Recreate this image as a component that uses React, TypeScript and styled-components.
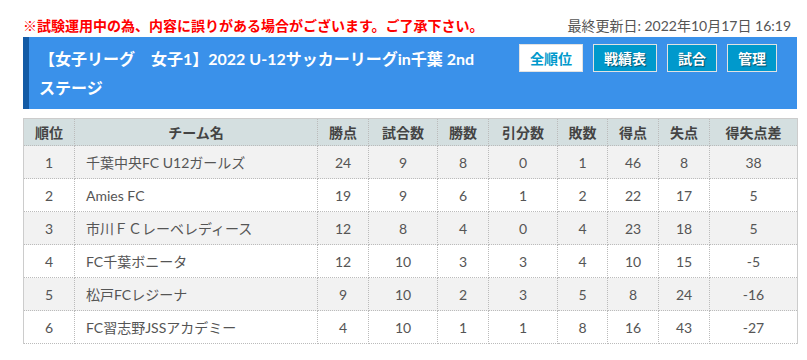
import styled, { createGlobalStyle } from "styled-components";

const GlobalStyle = createGlobalStyle`
  body {
    margin: 0;
    background: #fff;
    font-family: "Lato", "Noto Sans CJK JP", sans-serif;
  }
`;

const Page = styled.div`
  width: 774px;
  padding: 14px 10px 0 23px;
`;

const NoticeRow = styled.div`
  display: flex;
  justify-content: space-between;
  align-items: center;
  height: 23px;
  line-height: 20px;
`;

const Notice = styled.div`
  color: #ff0000;
  font-size: 14px;
  font-weight: 700;
`;

const Updated = styled.div`
  color: #555;
  font-size: 14px;
  margin-right: 6px;
`;

const Banner = styled.div`
  display: flex;
  align-items: flex-start;
  background: #3a91ea;
  border-left: 6px solid #135ba6;
  padding: 7px 20px 7px 10px;
`;

const Title = styled.h1`
  flex: 1;
  margin: 0 10px 0 0;
  color: #fff;
  font-size: 16px;
  font-weight: 700;
  line-height: 29px;
`;

const Word = styled.span`
  white-space: nowrap;
`;

const Nav = styled.div`
  display: flex;
  gap: 10px;
`;

const NavButton = styled.a<{ $active?: boolean }>`
  display: flex;
  align-items: center;
  height: 28px;
  box-sizing: border-box;
  padding: 0 10px;
  border: 1px solid #e2e2e2;
  background: ${(p) => (p.$active ? "#fff" : "#0099cc")};
  color: ${(p) => (p.$active ? "#0099cc" : "#fff")};
  text-shadow: ${(p) => (p.$active ? "none" : "1px 1px 1px #04506b")};
  font-size: 14px;
  font-weight: 700;
  white-space: nowrap;
  cursor: pointer;
`;

const Table = styled.table`
  width: 774px;
  margin-top: 9px;
  border-collapse: collapse;
  table-layout: fixed;
  border-top: 1px solid #cccccc;
  border-left: 1px solid #cccccc;
  border-right: 1px solid #cccccc;
  color: #555;
  font-size: 14px;
`;

const HeadCell = styled.th`
  height: 26px;
  padding: 0;
  background: #d4dfe0;
  color: #444;
  font-weight: 700;
  text-align: center;
  border: 1px dotted #bbbbbb;
  border-top: none;
`;

const Row = styled.tr<{ $odd: boolean }>`
  background: ${(p) => (p.$odd ? "#f2f2f2" : "#fff")};
`;

const Cell = styled.td<{ $left?: boolean }>`
  height: 32px;
  padding: 0 ${(p) => (p.$left ? "11px" : "0")};
  text-align: ${(p) => (p.$left ? "left" : "center")};
  border: 1px dotted #bbbbbb;
  white-space: nowrap;
`;

const columns = [
  { label: "順位", width: 51 },
  { label: "チーム名", width: 243 },
  { label: "勝点", width: 51 },
  { label: "試合数", width: 69 },
  { label: "勝数", width: 51 },
  { label: "引分数", width: 69 },
  { label: "敗数", width: 50 },
  { label: "得点", width: 51 },
  { label: "失点", width: 51 },
  { label: "得失点差", width: 88 },
];

const standings = [
  { rank: 1, team: "千葉中央FC U12ガールズ", pts: 24, played: 9, won: 8, drawn: 0, lost: 1, gf: 46, ga: 8, gd: 38 },
  { rank: 2, team: "Amies FC", pts: 19, played: 9, won: 6, drawn: 1, lost: 2, gf: 22, ga: 17, gd: 5 },
  { rank: 3, team: "市川ＦＣレーベレディース", pts: 12, played: 8, won: 4, drawn: 0, lost: 4, gf: 23, ga: 18, gd: 5 },
  { rank: 4, team: "FC千葉ボニータ", pts: 12, played: 10, won: 3, drawn: 3, lost: 4, gf: 10, ga: 15, gd: -5 },
  { rank: 5, team: "松戸FCレジーナ", pts: 9, played: 10, won: 2, drawn: 3, lost: 5, gf: 8, ga: 24, gd: -16 },
  { rank: 6, team: "FC習志野JSSアカデミー", pts: 4, played: 10, won: 1, drawn: 1, lost: 8, gf: 16, ga: 43, gd: -27 },
];

const navItems = ["全順位", "戦績表", "試合", "管理"];

export default function App() {
  return (
    <Page>
      <GlobalStyle />
      <NoticeRow>
        <Notice>※試験運用中の為、内容に誤りがある場合がございます。ご了承下さい。</Notice>
        <Updated>最終更新日: 2022年10月17日 16:19</Updated>
      </NoticeRow>
      <Banner>
        <Title>
          【女子リーグ　女子1】2022 U-12サッカーリーグin千葉 2nd <Word>ステージ</Word>
        </Title>
        <Nav>
          {navItems.map((item, i) => (
            <NavButton key={item} $active={i === 0}>
              {item}
            </NavButton>
          ))}
        </Nav>
      </Banner>
      <Table>
        <colgroup>
          {columns.map((c) => (
            <col key={c.label} style={{ width: c.width }} />
          ))}
        </colgroup>
        <thead>
          <tr>
            {columns.map((c) => (
              <HeadCell key={c.label}>{c.label}</HeadCell>
            ))}
          </tr>
        </thead>
        <tbody>
          {standings.map((s, i) => (
            <Row key={s.rank} $odd={i % 2 === 0}>
              <Cell>{s.rank}</Cell>
              <Cell $left>{s.team}</Cell>
              <Cell>{s.pts}</Cell>
              <Cell>{s.played}</Cell>
              <Cell>{s.won}</Cell>
              <Cell>{s.drawn}</Cell>
              <Cell>{s.lost}</Cell>
              <Cell>{s.gf}</Cell>
              <Cell>{s.ga}</Cell>
              <Cell>{s.gd}</Cell>
            </Row>
          ))}
        </tbody>
      </Table>
    </Page>
  );
}
